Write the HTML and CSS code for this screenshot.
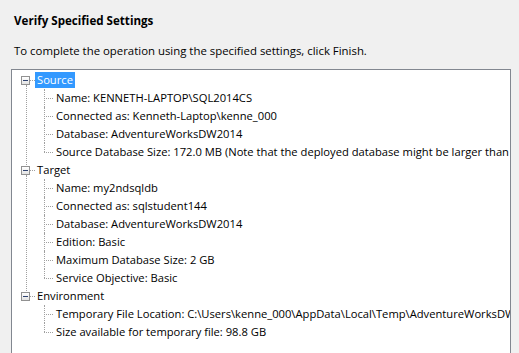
FILE: index.html
```html
<!DOCTYPE html>
<html lang="en">
<head>
  <meta charset="UTF-8">
  <title>Verify Specified Settings</title>
  <link rel="stylesheet" href="styles.css">
</head>
<body>
  <h1 class="title">Verify Specified Settings</h1>
  <p class="intro">To complete the operation using the specified settings, click Finish.</p>

  <div class="tree">
    <ul class="roots">
      <li class="node">
        <div class="row"><span class="toggle"></span><span class="stub"></span><span class="label selected">Source</span></div>
        <ul class="children">
          <li>Name: KENNETH-LAPTOP\SQL2014CS</li>
          <li>Connected as: Kenneth-Laptop\kenne_000</li>
          <li>Database: AdventureWorksDW2014</li>
          <li>Source Database Size: 172.0 MB (Note that the deployed database might be larger than the source database.)</li>
        </ul>
      </li>
      <li class="node">
        <div class="row"><span class="toggle"></span><span class="stub"></span><span class="label">Target</span></div>
        <ul class="children">
          <li>Name: my2ndsqldb</li>
          <li>Connected as: sqlstudent144</li>
          <li>Database: AdventureWorksDW2014</li>
          <li>Edition: Basic</li>
          <li>Maximum Database Size: 2 GB</li>
          <li>Service Objective: Basic</li>
        </ul>
      </li>
      <li class="node">
        <div class="row"><span class="toggle"></span><span class="stub"></span><span class="label">Environment</span></div>
        <ul class="children">
          <li>Temporary File Location: C:\Users\kenne_000\AppData\Local\Temp\AdventureWorksDW2014-20150315.bacpac</li>
          <li>Size available for temporary file: 98.8 GB</li>
        </ul>
      </li>
    </ul>
  </div>
</body>
</html>
```

FILE: styles.css
```css
body {
  margin: 0;
  background-color: #f0f0f0;
  font-family: 'Open Sans', sans-serif;
  font-size: 11.2px;
  color: #000;
  overflow: hidden;
}
.title {
  margin: 0;
  padding: 13px 0 0 14px;
  font-size: 11.6px;
  font-weight: 700;
  line-height: 16px;
}
.intro {
  margin: 0;
  padding: 14px 0 0 14px;
  font-size: 11.4px;
  line-height: 16px;
}
.tree {
  margin: 10px 0 0 11px;
  width: 498px;
  height: 282px;
  padding-top: 1px;
  background: #fff;
  border: 1px solid #828790;
  overflow: hidden;
  white-space: nowrap;
}
ul {
  list-style: none;
  margin: 0;
  padding: 0;
}
.node {
  position: relative;
}
.node:not(:last-child)::before {
  content: '';
  position: absolute;
  left: 14px;
  top: 14px;
  bottom: -4px;
  border-left: 1px dotted #a0a0a0;
}
.row {
  height: 18px;
  display: flex;
  align-items: center;
  padding-left: 9px;
}
.toggle {
  position: relative;
  width: 9px;
  height: 9px;
  box-sizing: border-box;
  border: 1px solid #919191;
  background: linear-gradient(#fff, #e3e3e3);
}
.toggle::after {
  content: '';
  position: absolute;
  left: 1px;
  right: 1px;
  top: 3px;
  height: 1px;
  background: #2f4370;
}
.stub {
  width: 5px;
  border-top: 1px dotted #a0a0a0;
}
.label {
  padding: 0 2px;
  line-height: 16px;
}
.label.selected {
  background: #3399ff;
  color: #fff;
}
.children li {
  position: relative;
  height: 18px;
  line-height: 18px;
  padding-left: 44px;
}
.children li::before {
  content: '';
  position: absolute;
  left: 32px;
  top: 9px;
  width: 9px;
  border-top: 1px dotted #a0a0a0;
}
.children li::after {
  content: '';
  position: absolute;
  left: 32px;
  top: 0;
  bottom: 0;
  border-left: 1px dotted #a0a0a0;
}
.children li:last-child::after {
  bottom: 9px;
}
```
